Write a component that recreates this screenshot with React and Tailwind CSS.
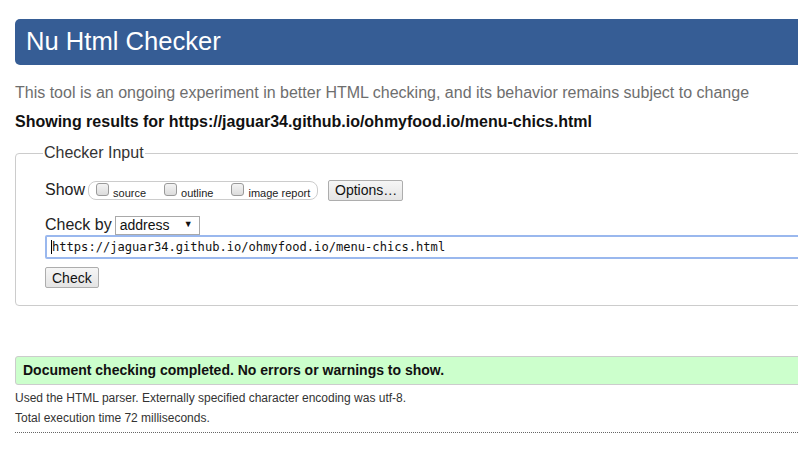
import React from "react";

function Checkbox({ label }) {
  return (
    <label className="flex items-start gap-[4px]">
      <span className="mt-[1px] w-[13px] h-[13px] rounded-[3px] border border-[#9a9a9a] bg-gradient-to-b from-[#f4f4f4] to-[#dcdcdc]" />
      <span className="text-[11px] leading-[14px] mt-[4px] text-[#222]">{label}</span>
    </label>
  );
}

function Btn({ children, className = "" }) {
  return (
    <button
      className={`h-[21px] px-[6px] border border-[#adadad] rounded-[2px] bg-gradient-to-b from-[#f6f6f6] to-[#e4e4e4] text-[14px] leading-[18px] text-[#111] ${className}`}
    >
      {children}
    </button>
  );
}

export default function App() {
  return (
    <div
      className="w-[798px] h-[475px] overflow-hidden bg-white text-[#222]"
      style={{ fontFamily: '"Liberation Sans", Arial, sans-serif' }}
    >
      <div className="w-[1100px] pl-[15px] pt-[19px]">
        <header className="h-[46px] rounded-l-[5px] bg-[#365d95] flex items-center pl-[11px]">
          <h1 className="text-[25.6px] text-white leading-none">Nu Html Checker</h1>
        </header>

        <p className="mt-[18px] text-[16px] leading-[20px] text-[#6e6e6e]">
          This tool is an ongoing experiment in better HTML checking, and its behavior remains subject to change
        </p>
        <p className="mt-[9px] text-[16px] leading-[20px] font-bold text-[#111]">
          Showing results for https://jaguar34.github.io/ohmyfood.io/menu-chics.html
        </p>

        <fieldset className="mt-[12px] border border-[#cccccc] rounded-[4px] pl-[29px] pb-[15px]">
          <legend className="ml-[-2px] px-[1px] text-[16px] leading-[18px] text-[#333]">Checker Input</legend>

          <div className="flex items-center mt-[17px] h-[22px]">
            <span className="text-[16px] text-[#222]">Show</span>
            <div className="ml-[3px] h-[19px] w-[230px] border border-[#cccccc] rounded-[8px] flex items-start pl-[7px] gap-[16px]">
              <Checkbox label="source" />
              <div className="ml-[2px]">
                <Checkbox label="outline" />
              </div>
              <div className="ml-[2px]">
                <Checkbox label="image report" />
              </div>
            </div>
            <Btn className="ml-[10px] w-[75px]">Options…</Btn>
          </div>

          <div className="flex items-center mt-[14px] h-[20px]">
            <span className="text-[16px] text-[#222]">Check by</span>
            <div className="ml-[3px] w-[85px] h-[19px] border border-[#a9a9a9] flex items-center justify-between pl-[4px] pr-[6px]">
              <span className="text-[14px] text-[#111]">address</span>
              <span className="text-[9px] text-[#111]">▼</span>
            </div>
          </div>

          <div className="h-[24px] border-2 border-[#9ab8ee] rounded-[2px] flex items-center pl-[4px]">
            <span className="w-px h-[14px] bg-black" />
            <span className="text-[12.1px] text-[#111]" style={{ fontFamily: '"DejaVu Sans Mono", monospace' }}>
              https://jaguar34.github.io/ohmyfood.io/menu-chics.html
            </span>
          </div>

          <Btn className="mt-[8px]">Check</Btn>
        </fieldset>

        <div className="mt-[50px] h-[29px] border border-[#cccccc] rounded-l-[3px] bg-[#ccffcc] flex items-center pl-[7px]">
          <span className="text-[14px] font-bold text-[#111]">Document checking completed. No errors or warnings to show.</span>
        </div>

        <p className="mt-[3px] text-[12px] leading-[20px] text-[#333]">
          Used the HTML parser. Externally specified character encoding was utf-8.
        </p>
        <p className="text-[12px] leading-[20px] text-[#333]">Total execution time 72 milliseconds.</p>
        <div className="mt-[4px] border-t border-dotted border-[#666]" />
      </div>
    </div>
  );
}
